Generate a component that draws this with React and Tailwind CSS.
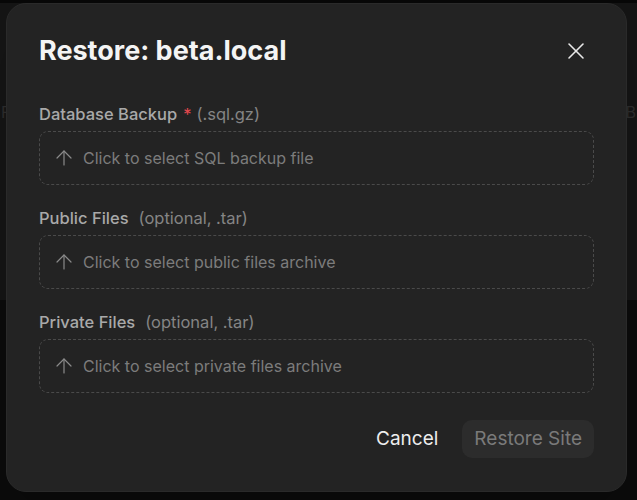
import { X, ArrowUp } from 'lucide-react';

const fields = [
  { label: 'Database Backup', required: true, hint: '(.sql.gz)', placeholder: 'Click to select SQL backup file' },
  { label: 'Public Files', hint: '(optional, .tar)', placeholder: 'Click to select public files archive' },
  { label: 'Private Files', hint: '(optional, .tar)', placeholder: 'Click to select private files archive' },
];

function FileField({ label, required, hint, placeholder }) {
  return (
    <div className="flex flex-col gap-[7px]">
      <div className="flex items-center h-[20px] text-[16.5px] leading-[20px]">
        <span className="font-medium text-[#a9a9a9]">{label}</span>
        {required ? <span className="ml-[6px] text-[#e5484d]">*</span> : null}
        <span className={`${required ? 'ml-[5px]' : 'ml-[10px]'} text-[#858585]`}>{hint}</span>
      </div>
      <button
        type="button"
        className="flex items-center gap-[7px] h-[54px] px-[12px] rounded-[9px] border border-dashed border-[#4a4a4a] text-left text-[16px] text-[#7c7c7c]"
      >
        <ArrowUp size={24} strokeWidth={1.2} className="text-[#8a8a8a]" />
        <span>{placeholder}</span>
      </button>
    </div>
  );
}

export default function App() {
  return (
    <div className="relative w-[637px] h-[500px] overflow-hidden bg-[#0b0b0b] font-['Inter',sans-serif]">
      <div className="h-[3px] bg-[#080808]" />
      <div className="h-[297px] bg-[#151515] flex items-start justify-between px-[1px] pt-[97px] text-[16px] text-[#2e2e2e]">
        <span>F</span>
        <span>B</span>
      </div>

      <div className="absolute left-[6px] top-[3px] w-[621px] h-[489px] rounded-[20px] bg-[#232323] border border-[#2a2a2a] shadow-2xl px-[32px] pt-[27px] pb-[33px] flex flex-col">
        <div className="flex items-center justify-between h-[40px]">
          <h2 className="text-[27px] leading-[40px] font-bold text-[#f4f4f4]">Restore: beta.local</h2>
          <button type="button" className="mr-[4px] text-[#e8e8e8]">
            <X size={28} strokeWidth={1.3} />
          </button>
        </div>

        <div className="mt-[33px] flex flex-col gap-[23px]">
          {fields.map((f) => (
            <FileField key={f.label} {...f} />
          ))}
        </div>

        <div className="mt-auto flex items-center justify-end gap-[24px]">
          <button type="button" className="text-[19px] text-[#ededed]">Cancel</button>
          <button type="button" className="h-[38px] px-[12px] rounded-[10px] bg-[#2c2c2c] text-[19px] text-[#7a7a7a]">
            Restore Site
          </button>
        </div>
      </div>
    </div>
  );
}
